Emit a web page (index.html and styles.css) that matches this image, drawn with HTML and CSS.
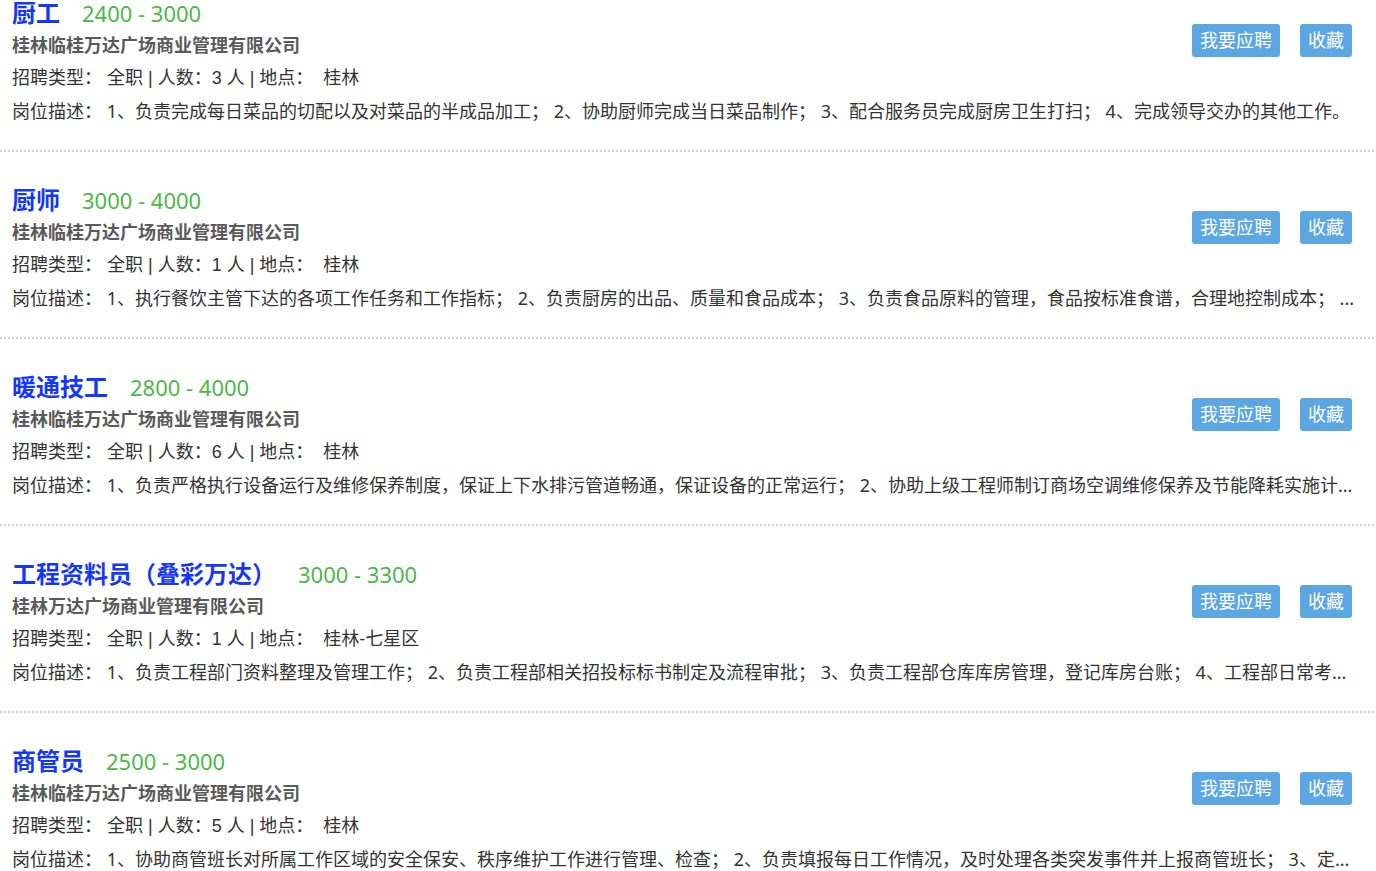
FILE: index.html
```html
<!DOCTYPE html>
<html lang="zh-CN">
<head>
<meta charset="utf-8">
<title>招聘</title>
<link rel="stylesheet" href="styles.css">
</head>
<body>
<div class="job-list">
  <div class="job">
    <div class="actions"><a class="btn">我要应聘</a><a class="btn">收藏</a></div>
    <div class="title"><span class="name">厨工</span><span class="salary">2400 - 3000</span></div>
    <div class="company">桂林临桂万达广场商业管理有限公司</div>
    <div class="meta">招聘类型： 全职 | 人数：3 人 | 地点：&nbsp; 桂林</div>
    <div class="desc">岗位描述： 1、负责完成每日菜品的切配以及对菜品的半成品加工； 2、协助厨师完成当日菜品制作； 3、配合服务员完成厨房卫生打扫； 4、完成领导交办的其他工作。</div>
  </div>
  <div class="job">
    <div class="actions"><a class="btn">我要应聘</a><a class="btn">收藏</a></div>
    <div class="title"><span class="name">厨师</span><span class="salary">3000 - 4000</span></div>
    <div class="company">桂林临桂万达广场商业管理有限公司</div>
    <div class="meta">招聘类型： 全职 | 人数：1 人 | 地点：&nbsp; 桂林</div>
    <div class="desc">岗位描述： 1、执行餐饮主管下达的各项工作任务和工作指标； 2、负责厨房的出品、质量和食品成本； 3、负责食品原料的管理，食品按标准食谱，合理地控制成本； ...</div>
  </div>
  <div class="job">
    <div class="actions"><a class="btn">我要应聘</a><a class="btn">收藏</a></div>
    <div class="title"><span class="name">暖通技工</span><span class="salary">2800 - 4000</span></div>
    <div class="company">桂林临桂万达广场商业管理有限公司</div>
    <div class="meta">招聘类型： 全职 | 人数：6 人 | 地点：&nbsp; 桂林</div>
    <div class="desc">岗位描述： 1、负责严格执行设备运行及维修保养制度，保证上下水排污管道畅通，保证设备的正常运行； 2、协助上级工程师制订商场空调维修保养及节能降耗实施计...</div>
  </div>
  <div class="job">
    <div class="actions"><a class="btn">我要应聘</a><a class="btn">收藏</a></div>
    <div class="title"><span class="name">工程资料员（叠彩万达）</span><span class="salary">3000 - 3300</span></div>
    <div class="company">桂林万达广场商业管理有限公司</div>
    <div class="meta">招聘类型： 全职 | 人数：1 人 | 地点：&nbsp; 桂林-七星区</div>
    <div class="desc">岗位描述： 1、负责工程部门资料整理及管理工作； 2、负责工程部相关招投标标书制定及流程审批； 3、负责工程部仓库库房管理，登记库房台账； 4、工程部日常考...</div>
  </div>
  <div class="job">
    <div class="actions"><a class="btn">我要应聘</a><a class="btn">收藏</a></div>
    <div class="title"><span class="name">商管员</span><span class="salary">2500 - 3000</span></div>
    <div class="company">桂林临桂万达广场商业管理有限公司</div>
    <div class="meta">招聘类型： 全职 | 人数：5 人 | 地点：&nbsp; 桂林</div>
    <div class="desc">岗位描述： 1、协助商管班长对所属工作区域的安全保安、秩序维护工作进行管理、检查； 2、负责填报每日工作情况，及时处理各类突发事件并上报商管班长； 3、定...</div>
  </div>
</div>
</body>
</html>
```
FILE: styles.css
```css
html, body {
  margin: 0;
  padding: 0;
  background: #fff;
  overflow: hidden;
}
body {
  font-family: "Noto Sans", "Noto Sans CJK SC", sans-serif;
  color: #333;
}
.job-list {
  margin-top: -35px;
  width: 1374px;
}
.job {
  padding: 32px 12px 22px 12px;
  border-bottom: 2px dotted #d0d0d0;
}
.actions {
  float: right;
  display: flex;
  gap: 20px;
  margin-top: 27px;
  margin-right: 10px;
}
.btn {
  display: block;
  height: 33px;
  line-height: 33px;
  padding: 0 8px;
  background: #5ca6e2;
  color: #fff;
  font-size: 18px;
  border-radius: 3px;
  cursor: pointer;
}
.title {
  height: 32px;
  line-height: 32px;
  white-space: nowrap;
}
.name {
  font-size: 24px;
  font-weight: bold;
  color: #1538f7;
}
.salary {
  font-size: 22px;
  color: #4db748;
  margin-left: 22px;
}
.company {
  height: 33px;
  line-height: 33px;
  font-size: 18px;
  font-weight: bold;
  color: #5a5a5a;
}
.meta, .desc {
  height: 33px;
  line-height: 33px;
  font-size: 18px;
  color: #333;
  white-space: nowrap;
}
.meta {
  font-family: "Liberation Sans", "Noto Sans CJK SC", sans-serif;
}
.desc {
  overflow: hidden;
}
```
